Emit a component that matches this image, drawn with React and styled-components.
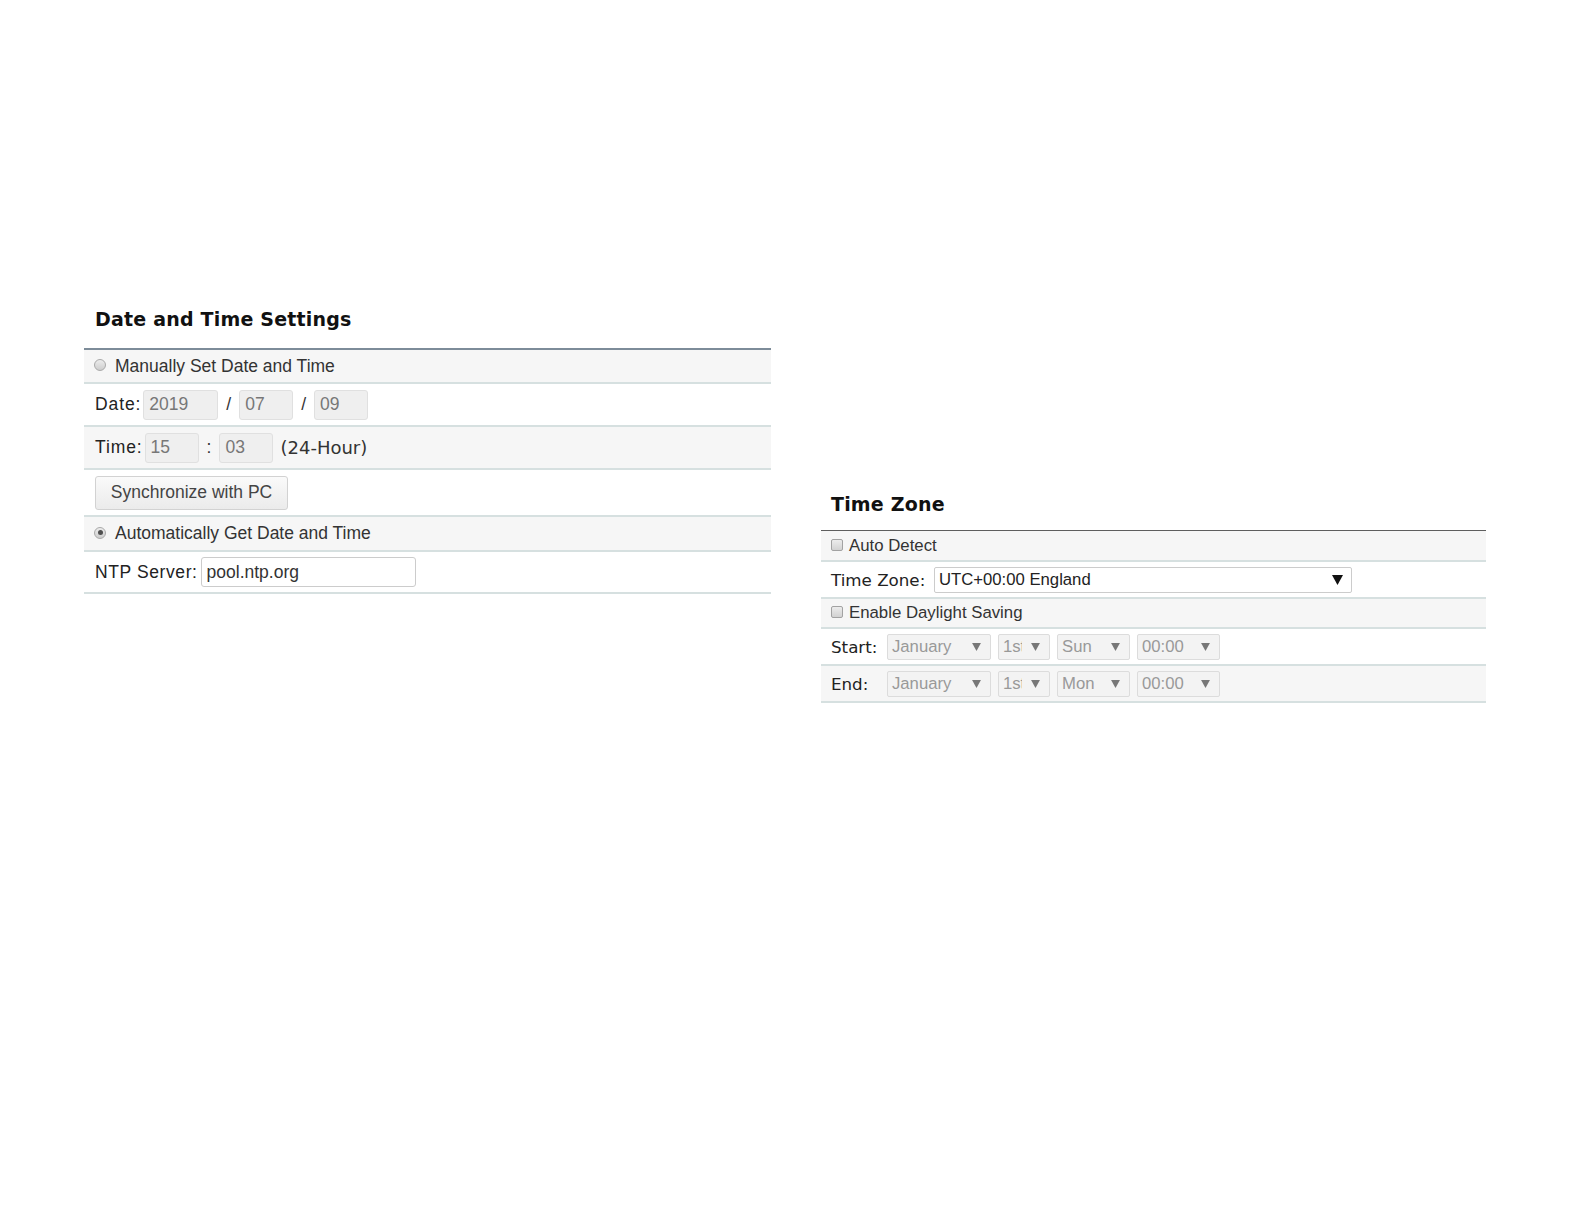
import React from "react"
import styled, { createGlobalStyle } from "styled-components"

const GlobalStyle = createGlobalStyle`
  html, body {
    margin: 0;
    padding: 0;
    background: #ffffff;
  }
  body {
    font-family: "Liberation Sans", Arial, sans-serif;
    color: #333333;
  }
`

const Page = styled.div`
  display: flex;
  align-items: flex-start;
  gap: 50px;
  padding: 307px 0 0 84px;
  min-height: 1224px;
  box-sizing: border-box;
`

const Section = styled.section`
  width: ${props => props.$width}px;
  margin-top: ${props => props.$offset || 0}px;
`

const Heading = styled.h2`
  margin: 0 0 ${props => props.$space}px;
  padding-left: ${props => props.$indent}px;
  height: 24px;
  line-height: 24px;
  font-family: "DejaVu Sans", Verdana, sans-serif;
  font-size: 19px;
  font-weight: bold;
  letter-spacing: 0.2px;
  color: #111111;
`

const Table = styled.div`
  border-top: ${props => props.$rule};
`

const Row = styled.div`
  box-sizing: border-box;
  display: flex;
  align-items: center;
  height: ${props => props.$h}px;
  padding-left: ${props => props.$pad || 11}px;
  border-bottom: 2px solid #d6e0e0;
  font-size: ${props => props.$size || 17.5}px;
  background: ${props => (props.$shade ? "#f6f6f6" : "#ffffff")};
  white-space: nowrap;
`

const Radio = styled.span`
  box-sizing: border-box;
  position: relative;
  width: 12px;
  height: 12px;
  margin: 0 9px 2px -1px;
  border-radius: 50%;
  border: 1px solid #a9a9a9;
  background: linear-gradient(#ececec, #cdcdcd);

  &::after {
    content: "";
    display: ${props => (props.$on ? "block" : "none")};
    position: absolute;
    left: 2.5px;
    top: 2.5px;
    width: 5px;
    height: 5px;
    border-radius: 50%;
    background: #4f4f4f;
  }
`

const Check = styled.span`
  box-sizing: border-box;
  width: 12px;
  height: 12px;
  margin: 0 6px 2px 0;
  border-radius: 2px;
  border: 1px solid #a2a2a2;
  background: linear-gradient(#ececec, #d2d2d2);
`

const Label = styled.span`
  color: #222222;
  margin-right: ${props => props.$gap || 2}px;
  letter-spacing: ${props => props.$spread || 0}px;
`

const WideLabel = styled.span`
  font-family: "DejaVu Sans", Verdana, sans-serif;
  font-size: 16.7px;
  color: #222222;
  width: ${props => props.$width}px;
  flex: none;
`

const Field = styled.input`
  box-sizing: border-box;
  width: ${props => props.$w}px;
  height: 30px;
  padding: 0 5px;
  margin: 0;
  border: 1px solid ${props => (props.$live ? "#cccccc" : "#e0e0e0")};
  border-radius: 3px;
  background: ${props => (props.$live ? "#ffffff" : "#efefef")};
  color: ${props => (props.$live ? "#333333" : "#777777")};
  font-family: "Liberation Sans", Arial, sans-serif;
  font-size: 17.5px;
  outline: none;
`

const Sep = styled.span`
  margin: 0 8px;
  color: #333333;
`

const Hint = styled.span`
  margin-left: 7px;
  font-family: "DejaVu Sans", Verdana, sans-serif;
  font-size: 18px;
  color: #333333;
`

const Button = styled.button`
  box-sizing: border-box;
  width: 193px;
  height: 34px;
  padding: 0;
  border: 1px solid #d2d2d2;
  border-radius: 3px;
  background: linear-gradient(#fafafa, #ebebeb);
  color: #444444;
  font-family: "Liberation Sans", Arial, sans-serif;
  font-size: 17.5px;
`

const Select = styled.div`
  box-sizing: border-box;
  display: flex;
  align-items: center;
  width: ${props => props.$w}px;
  height: 26px;
  margin-right: 7px;
  border: 1px solid ${props => (props.$live ? "#cccccc" : "#dcdcdc")};
  border-radius: 2px;
  background: ${props => (props.$live ? "#ffffff" : "#f3f3f3")};
  color: ${props => (props.$live ? "#222222" : "#999999")};
  font-size: 16.7px;
`

const SelectText = styled.span`
  flex: 1;
  overflow: hidden;
  padding-left: 4px;
`

const Arrow = styled.span`
  flex: none;
  width: 27px;
  display: flex;
  justify-content: center;
  align-items: center;
`

const Caret = ({ dark }) => (
  <svg width={dark ? 11 : 9} height={dark ? 10 : 8} viewBox="0 0 10 9">
    <polygon points="0,0 10,0 5,9" fill={dark ? "#111111" : "#777777"} />
  </svg>
)

const Dropdown = ({ w, live, children }) => (
  <Select $w={w} $live={live}>
    <SelectText>{children}</SelectText>
    <Arrow>
      <Caret dark={live} />
    </Arrow>
  </Select>
)

const months = [
  { label: "Start:", day: "Sun", w: 73 },
  { label: "End:", day: "Mon", w: 73 },
]

const App = () => {
  return (
    <>
      <GlobalStyle />
      <Page>
        <Section $width={687}>
          <Heading $space={17} $indent={11}>
            Date and Time Settings
          </Heading>
          <Table $rule="2px solid #7d8c99">
            <Row $h={34} $shade>
              <Radio />
              Manually Set Date and Time
            </Row>
            <Row $h={43}>
              <Label $spread={0.9}>Date:</Label>
              <Field $w={75} defaultValue="2019" readOnly />
              <Sep>/</Sep>
              <Field $w={54} defaultValue="07" readOnly />
              <Sep>/</Sep>
              <Field $w={54} defaultValue="09" readOnly />
            </Row>
            <Row $h={43} $shade>
              <Label $spread={0.9}>Time:</Label>
              <Field $w={54} defaultValue="15" readOnly />
              <Sep>:</Sep>
              <Field $w={54} defaultValue="03" readOnly />
              <Hint>(24-Hour)</Hint>
            </Row>
            <Row $h={47}>
              <Button>Synchronize with PC</Button>
            </Row>
            <Row $h={35} $shade>
              <Radio $on />
              Automatically Get Date and Time
            </Row>
            <Row $h={42}>
              <Label $gap={3} $spread={0.6}>
                NTP Server:
              </Label>
              <Field $w={215} $live defaultValue="pool.ntp.org" readOnly />
            </Row>
          </Table>
        </Section>

        <Section $width={665} $offset={185}>
          <Heading $space={14} $indent={10}>
            Time Zone
          </Heading>
          <Table $rule="1px solid #5e5e5e">
            <Row $h={31} $pad={10} $size={16.8} $shade>
              <Check />
              Auto Detect
            </Row>
            <Row $h={37} $pad={10} $size={16.8}>
              <WideLabel $width={103}>Time Zone:</WideLabel>
              <Dropdown w={418} live>
                UTC+00:00 England
              </Dropdown>
            </Row>
            <Row $h={30} $pad={10} $size={16.8} $shade>
              <Check />
              Enable Daylight Saving
            </Row>
            {months.map((m, i) => (
              <Row key={m.label} $h={37} $pad={10} $size={16.8} $shade={i === 1}>
                <WideLabel $width={56}>{m.label}</WideLabel>
                <Dropdown w={104}>January</Dropdown>
                <Dropdown w={52}>1st</Dropdown>
                <Dropdown w={m.w}>{m.day}</Dropdown>
                <Dropdown w={83}>00:00</Dropdown>
              </Row>
            ))}
          </Table>
        </Section>
      </Page>
    </>
  )
}

export default App
